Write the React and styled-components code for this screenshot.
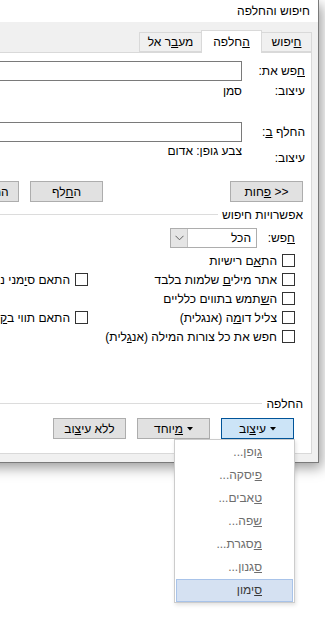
import React from 'react';
import styled, { createGlobalStyle } from 'styled-components';

const Global = createGlobalStyle`
  html, body { margin: 0; padding: 0; background: #fff; overflow: hidden; }
  body { font-family: "Liberation Sans", Arial, sans-serif; font-size: 12px; color: #000; }
  u { text-underline-offset: 1px; }
`;

const Stage = styled.div`
  position: relative;
  width: 325px;
  height: 622px;
  overflow: hidden;
  background: #fff;
`;

const Dialog = styled.div`
  direction: rtl;
  box-sizing: border-box;
  width: 555px;
  height: 463px;
  margin-left: -236px;
  border: 1px solid #7a7a7a;
  border-top: none;
  background: #f0f0f0;
  box-shadow: 3px 5px 12px rgba(0, 0, 0, 0.38);
  display: flex;
  flex-direction: column;
`;

const TitleBar = styled.div`
  height: 22px;
  background: #fff;
  padding-right: 8px;
  line-height: 22px;
  font-size: 12px;
`;

const Body = styled.div`
  flex: 1;
  display: flex;
  flex-direction: column;
  padding: 8px 6px 8px 6px;
  min-height: 0;
`;

const TabStrip = styled.div`
  display: flex;
  align-items: flex-end;
  height: 23px;
  margin-bottom: -1px;
  position: relative;
  z-index: 1;
`;

const Tab = styled.div`
  box-sizing: border-box;
  width: ${p => p.$w}px;
  height: ${p => (p.$active ? 23 : 20)}px;
  margin-bottom: ${p => (p.$active ? 0 : 1)}px;
  margin-left: -1px;
  border: 1px solid #d9d9d9;
  border-bottom: ${p => (p.$active ? 'none' : '1px solid #d9d9d9')};
  background: ${p => (p.$active ? '#fff' : '#f0f0f0')};
  text-align: center;
  line-height: ${p => (p.$active ? 22 : 18)}px;
  position: relative;
  z-index: ${p => (p.$active ? 2 : 1)};
`;

const Panel = styled.div`
  flex: 1;
  background: #fff;
  border: 1px solid #d9d9d9;
  padding: 8px 6px 14px 6px;
  display: flex;
  flex-direction: column;
  min-height: 0;
`;

const FieldRow = styled.div`
  display: grid;
  grid-template-columns: ${p => p.$label || 63}px 1fr;
  align-items: ${p => p.$align || 'center'};
  margin-top: ${p => p.$mt || 0}px;
  line-height: 14px;
`;

const Label = styled.div`
  padding-top: ${p => p.$pt || 0}px;
  white-space: nowrap;
`;

const TextInput = styled.div`
  box-sizing: border-box;
  height: 20px;
  border: 1px solid #7a7a7a;
  background: #fff;
`;

const ButtonRow = styled.div`
  display: flex;
  align-items: center;
  gap: 11px;
  margin-top: ${p => p.$mt || 0}px;
  padding-right: ${p => p.$pr || 0}px;
`;

const ButtonGroup = styled.div`
  display: flex;
  gap: 11px;
  margin-right: auto;
`;

const Button = styled.div`
  box-sizing: border-box;
  width: 73px;
  height: 21px;
  border: 1px solid ${p => (p.$pressed ? '#005499' : '#adadad')};
  background: ${p => (p.$pressed ? '#cce4f7' : '#e1e1e1')};
  display: flex;
  align-items: center;
  justify-content: center;
  gap: 4px;
  white-space: nowrap;
  line-height: 14px;
`;

const BtnText = styled.span`
  white-space: nowrap;
`;

const GroupTitle = styled.div`
  display: flex;
  align-items: center;
  line-height: 14px;
  margin-top: ${p => p.$mt || 0}px;
  padding-right: 2px;
`;

const GroupLine = styled.div`
  flex: 1;
  height: 1px;
  background: #dcdcdc;
  margin-right: 4px;
  margin-top: -2px;
`;

const Options = styled.div`
  padding-right: 10px;
  display: flex;
  flex-direction: column;
`;

const Select = styled.div`
  box-sizing: border-box;
  width: 87px;
  height: 20px;
  border: 1px solid #adadad;
  background: #fff;
  display: flex;
`;

const SelectValue = styled.div`
  flex: 1;
  padding-right: 5px;
  line-height: 18px;
`;

const SelectArrow = styled.div`
  width: 16px;
  background: #e5e5e5;
  border-right: 1px solid #c4c4c4;
  display: flex;
  align-items: center;
  justify-content: center;
`;

const CheckGrid = styled.div`
  display: grid;
  grid-template-columns: 207px 1fr;
  grid-auto-rows: 19px;
  margin-top: 3px;
`;

const Check = styled.div`
  display: flex;
  align-items: center;
  gap: 5px;
  white-space: nowrap;
  grid-column: ${p => p.$col};
  grid-row: ${p => p.$row};
`;

const Box = styled.div`
  box-sizing: border-box;
  width: 13px;
  height: 13px;
  border: 1px solid #333;
  background: #fff;
  flex: none;
`;

const Bottom = styled.div`
  margin-top: auto;
  display: flex;
  flex-direction: column;
`;

const Menu = styled.div`
  position: absolute;
  left: 174px;
  top: 439px;
  box-sizing: border-box;
  width: 121px;
  height: 164px;
  border: 1px solid #cccccc;
  background: #fff;
  padding-top: 1px;
  direction: rtl;
  box-shadow: 1px 2px 4px rgba(0, 0, 0, 0.12);
`;

const MenuItem = styled.div`
  height: 23px;
  box-sizing: border-box;
  margin: 0 1px;
  padding-right: 30px;
  line-height: 21px;
  color: ${p => (p.$active ? '#3a3a3a' : '#6d6d6d')};
  border: 1px solid ${p => (p.$active ? '#a8c3e9' : 'transparent')};
  background: ${p => (p.$active ? '#d5e1f2' : 'transparent')};
`;

const Caret = () => (
  <svg width="6" height="4" viewBox="0 0 6 4"><path d="M0 0h6L3 3.5z" fill="#000" /></svg>
);

const Chevron = () => (
  <svg width="9" height="6" viewBox="0 0 9 6"><path d="M0.5 0.8L4.5 4.8L8.5 0.8" fill="none" stroke="#606060" strokeWidth="1" /></svg>
);

const checks = [
  { col: 1, row: 1, node: <>הת<u>א</u>ם רישיות</> },
  { col: 1, row: 2, node: <>אתר מילי<u>ם</u> שלמות בלבד</> },
  { col: 2, row: 2, node: <>התאם ס<u>י</u>מני ניקוד</> },
  { col: 1, row: 3, node: <>ה<u>ש</u>תמש בתווים כלליים</> },
  { col: 1, row: 4, node: <>צליל דו<u>מ</u>ה (אנגלית)</> },
  { col: 2, row: 4, node: <>התאם תווי ב<u>ק</u>רה</> },
  { col: 1, row: 5, node: <>חפש את כל צורות המילה (אנ<u>ג</u>לית)</> },
];

const menuItems = [
  <><u>ג</u>ופן...</>,
  <><u>פ</u>יסקה...</>,
  <><u>ט</u>אבים...</>,
  <><u>ש</u>פה...</>,
  <><u>מ</u>סגרת...</>,
  <><u>ס</u>גנון...</>,
  <><u>ס</u>ימון</>,
];

export default function App() {
  return (
    <Stage>
      <Global />
      <Dialog>
        <TitleBar>חיפוש והחלפה</TitleBar>
        <Body>
          <TabStrip>
            <Tab $w={51}><u>ח</u>יפוש</Tab>
            <Tab $w={61} $active><u>ה</u>חלפה</Tab>
            <Tab $w={63}>מע<u>ב</u>ר אל</Tab>
          </TabStrip>
          <Panel>
            <FieldRow>
              <Label><u>ח</u>פש את:</Label>
              <TextInput />
            </FieldRow>
            <FieldRow $mt={3}>
              <Label>עיצוב:</Label>
              <div>סמן</div>
            </FieldRow>
            <FieldRow $mt={24}>
              <Label>החלף <u>ב</u>:</Label>
              <TextInput />
            </FieldRow>
            <FieldRow $mt={2} $align="start">
              <Label $pt={7}>עיצוב:</Label>
              <div>צבע גופן: אדום</div>
            </FieldRow>
            <ButtonRow $mt={16} $pr={2}>
              <Button><BtnText>&lt;&lt; <u>פ</u>חות</BtnText></Button>
              <ButtonGroup>
                <Button><BtnText>ה<u>ח</u>לף</BtnText></Button>
                <Button><BtnText>החלף ה<u>כ</u>ל</BtnText></Button>
                <Button><BtnText>חפש את ה<u>ב</u>א</BtnText></Button>
                <Button><BtnText>ביטול</BtnText></Button>
              </ButtonGroup>
            </ButtonRow>
            <GroupTitle $mt={6}>
              <span>אפשרויות חיפוש</span>
              <GroupLine />
            </GroupTitle>
            <Options>
              <FieldRow $label={38} $mt={6}>
                <Label><u>ח</u>פש:</Label>
                <Select>
                  <SelectValue>הכל</SelectValue>
                  <SelectArrow><Chevron /></SelectArrow>
                </Select>
              </FieldRow>
              <CheckGrid>
                {checks.map((c, i) => (
                  <Check key={i} $col={c.col} $row={c.row}>
                    <Box />
                    <span>{c.node}</span>
                  </Check>
                ))}
              </CheckGrid>
            </Options>
            <Bottom>
              <GroupTitle>
                <span>החלפה</span>
                <GroupLine />
              </GroupTitle>
              <ButtonRow $mt={7} $pr={11}>
                <Button $pressed><Caret /><BtnText>עי<u>צ</u>וב</BtnText></Button>
                <Button><Caret /><BtnText><u>מ</u>יוחד</BtnText></Button>
                <Button><BtnText>ללא עי<u>צ</u>וב</BtnText></Button>
              </ButtonRow>
            </Bottom>
          </Panel>
        </Body>
      </Dialog>
      <Menu>
        {menuItems.map((m, i) => (
          <MenuItem key={i} $active={i === menuItems.length - 1}>{m}</MenuItem>
        ))}
      </Menu>
    </Stage>
  );
}
